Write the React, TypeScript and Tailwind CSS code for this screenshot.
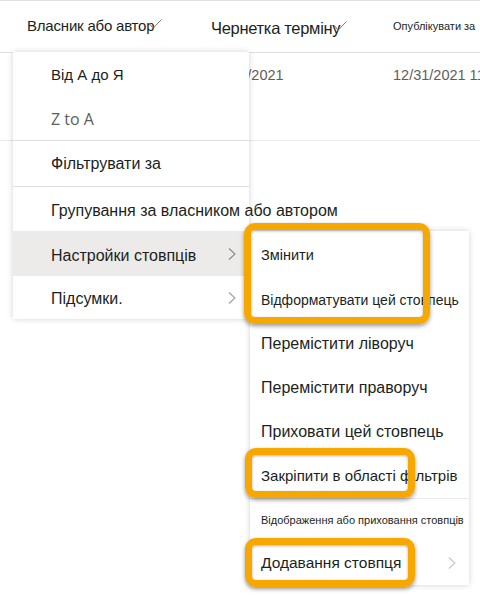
import { ReactNode } from 'react'

const Check = ({ className }: { className: string }) => (
  <svg className={className} width="13" height="10" viewBox="0 0 13 10" fill="none">
    <polyline points="0.5,4.5 4,9.3 12.5,0.5" stroke="#797775" strokeWidth="1" />
  </svg>
)

const Chevron = ({ color }: { color: string }) => (
  <svg width="8" height="12" viewBox="0 0 8 12" fill="none">
    <polyline points="1,0.5 7,6 1,11.5" stroke={color} strokeWidth="1.1" />
  </svg>
)

function Item({ h, children, className = '', chevron, active }: { h: string; children: ReactNode; className?: string; chevron?: string; active?: boolean }) {
  return (
    <div className={`flex items-center justify-between ${h} ${active ? 'bg-[#edebe9]' : ''}`}>
      <span className={className}>{children}</span>
      {chevron && <span className="pr-[13px]"><Chevron color={chevron} /></span>}
    </div>
  )
}

// orange annotation frames
function Frame({ className }: { className: string }) {
  return (
    <div className={`absolute rounded-[11px] border-[7px] border-[#f7a800] shadow-[0_2px_4px_rgba(0,0,0,0.4),inset_0_1px_3px_rgba(0,0,0,0.3)] ${className}`} />
  )
}

export default function App() {
  return (
    <div className="relative h-[597px] w-[480px] overflow-hidden bg-white text-[#201f1e] font-['Liberation_Sans',Arial,sans-serif]">
      {/* list header */}
      <div className="flex h-[53px] items-center border-t border-b border-[#e1dfdd] whitespace-nowrap">
        <div className="relative w-[211px] shrink-0 pl-[27px] text-[15px] tracking-[-0.2px]">
          Власник або автор
          <Check className="absolute left-[149px] top-[4px]" />
        </div>
        <div className="relative w-[182px] shrink-0 mt-[3px] text-[16.5px] tracking-[-0.3px]">
          Чернетка терміну
          <Check className="absolute left-[123px] top-[5px]" />
        </div>
        <div className="shrink-0 text-[11px]">Опублікувати за</div>
      </div>

      {/* data row */}
      <div className="flex h-[88px] border-b border-[#edebe9] pt-[12px] text-[14.5px] text-[#605e5c] whitespace-nowrap">
        <div className="w-[211px] shrink-0" />
        <div className="w-[182px] shrink-0">12/31/2021</div>
        <div className="shrink-0">12/31/2021 11:00 PM</div>
      </div>

      {/* column menu */}
      <div className="absolute left-[13px] top-[52px] w-[236px] bg-white shadow-[0_0_6px_rgba(0,0,0,0.18)] text-[16px] whitespace-nowrap">
        <Item h="h-[46px]" className="pl-[38px] text-[15px]">Від А до Я</Item>
        <Item h="h-[42px]" className="pl-[38px] text-[#605e5c] font-['Open_Sans',sans-serif]">Z to A</Item>
        <div className="h-px bg-[#e1dfdd]" />
        <Item h="h-[45px]" className="pl-[38px]">Фільтрувати за</Item>
        <div className="h-px bg-[#e1dfdd]" />
        <Item h="h-[44px]" className="pl-[38px] pt-[4px]">Групування за власником або автором</Item>
        <Item h="h-[45px]" className="pl-[38px] pt-[4px]" chevron="#8a8886" active>Настройки стовпців</Item>
        <Item h="h-[43px]" className="pl-[38px] pt-[2px]" chevron="#a19f9d">Підсумки.</Item>
      </div>

      {/* submenu */}
      <div className="absolute left-[250px] top-[231px] w-[219px] bg-white pt-[3px] shadow-[0_0_6px_rgba(0,0,0,0.18)] whitespace-nowrap">
        <Item h="h-[44px]" className="pl-[11px] text-[14.5px]">Змінити</Item>
        <Item h="h-[44px]" className="pl-[11px] text-[14px]">Відформатувати цей стовпець</Item>
        <Item h="h-[44px]" className="pl-[11px] text-[16px]">Перемістити ліворуч</Item>
        <Item h="h-[44px]" className="pl-[11px] text-[16px]">Перемістити праворуч</Item>
        <Item h="h-[44px]" className="pl-[11px] text-[16px]">Приховати цей стовпець</Item>
        <Item h="h-[44px]" className="pl-[11px] text-[15px]">Закріпити в області фільтрів</Item>
        <div className="h-px bg-[#edebe9]" />
        <Item h="h-[42px]" className="pl-[11px] text-[11px]">Відображення або приховання стовпців</Item>
        <Item h="h-[44px]" className="pl-[11px] text-[15.5px]" chevron="#c8c6c4">Додавання стовпця</Item>
      </div>

      <Frame className="left-[244px] top-[223px] h-[101px] w-[186px]" />
      <Frame className="left-[245px] top-[448px] h-[50px] w-[170px]" />
      <Frame className="left-[245px] top-[538px] h-[49px] w-[170px]" />
    </div>
  )
}
